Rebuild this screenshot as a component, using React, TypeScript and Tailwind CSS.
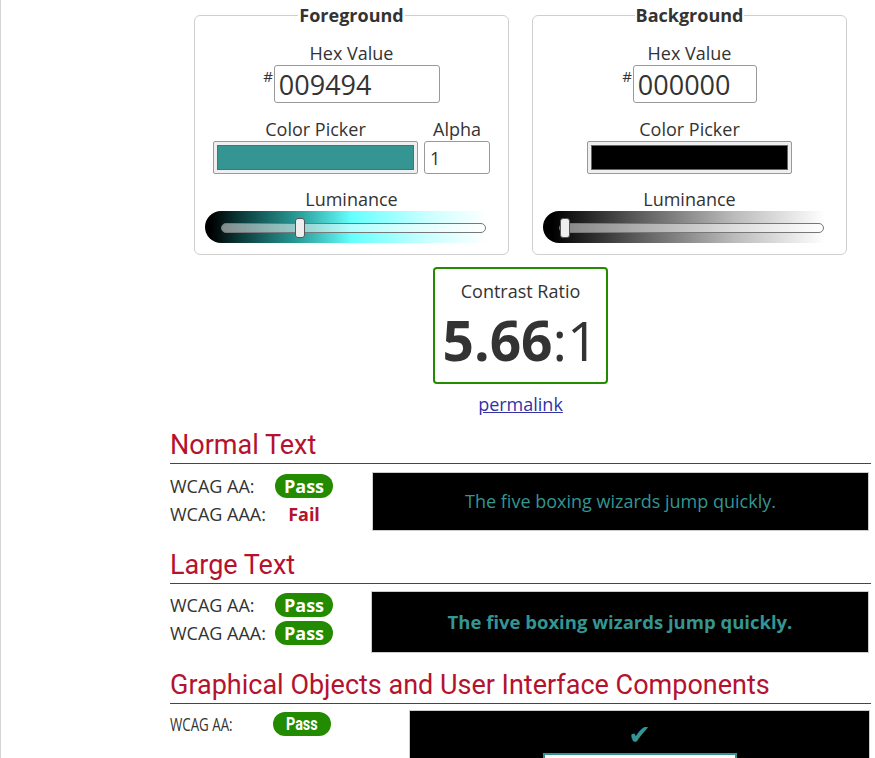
import React from "react";

const GREEN = "bg-[#238b00]";

function PassBadge({ condensed = false }: { condensed?: boolean }) {
  return (
    <span
      className={`${GREEN} inline-flex h-[24px] w-[58px] items-center justify-center rounded-full font-bold text-white text-[18px] leading-none`}
    >
      <span className={condensed ? "inline-block scale-x-[0.8] font-['Roboto',sans-serif]" : ""}>Pass</span>
    </span>
  );
}

function FailText() {
  return (
    <span className="inline-flex w-[58px] justify-center font-bold text-[#b5122e] text-[18px] leading-none">
      Fail
    </span>
  );
}

function Slider({ gradient, thumbLeft }: { gradient: "fg" | "bg"; thumbLeft: number }) {
  const bg =
    gradient === "fg"
      ? "bg-[linear-gradient(to_right,#000_2%,#0b3a3a_12%,#2a9e9a_32%,#66ffff_50%,#c8ffff_75%,#ffffff_96%)]"
      : "bg-[linear-gradient(to_right,#000_3%,#555_30%,#bbb_65%,#ffffff_96%)]";
  return (
    <div className={`relative h-[32px] w-[294px] rounded-l-full ${bg}`}>
      <div className="absolute left-[16px] right-[13px] top-[12px] h-[10px] rounded-full border border-[#777] bg-white/50" />
      <div
        className="absolute top-[7px] h-[20px] w-[10px] rounded-[3px] border border-[#555] bg-[#eee]"
        style={{ left: thumbLeft }}
      />
    </div>
  );
}

function ColorPanel({
  title,
  hex,
  hexWidth,
  swatch,
  alpha,
  thumbLeft,
}: {
  title: string;
  hex: string;
  hexWidth: string;
  swatch: string;
  alpha: boolean;
  thumbLeft: number;
}) {
  return (
    <fieldset className="h-[252px] w-[315px] rounded-[6px] border border-[#cfcfcf]">
      <legend className="mx-auto px-[1px] text-[18px] font-bold leading-[24px] text-[#333]">{title}</legend>
      <div className="flex flex-col items-center">
        <div className="mt-[14px] leading-[24px]">Hex Value</div>
        <div className="flex items-start">
          <span className="mr-[1px] mt-[4px] text-[15px] leading-none">#</span>
          <div
            className={`flex h-[38px] ${hexWidth} items-center rounded-[3px] border border-[#999] pl-[4px] text-[27px] leading-none`}
          >
            {hex}
          </div>
        </div>
        <div className="mt-[14px] flex items-end gap-[6px]">
          <div className="flex flex-col items-center">
            <div className="leading-[24px]">Color Picker</div>
            <div className="h-[33px] w-[205px] rounded-[2px] border border-[#999] bg-[#efefef] p-[3px]">
              <div className={`h-full w-full border border-[#666] ${swatch}`} />
            </div>
          </div>
          {alpha && (
            <div className="flex flex-col items-center">
              <div className="leading-[24px]">Alpha</div>
              <div className="flex h-[33px] w-[66px] items-center rounded-[3px] border border-[#999] pl-[5px] leading-none">
                1
              </div>
            </div>
          )}
        </div>
        <div className="mt-[13px] leading-[24px]">Luminance</div>
        <Slider gradient={alpha ? "fg" : "bg"} thumbLeft={thumbLeft} />
      </div>
    </fieldset>
  );
}

function SectionHeading({ children, first = false }: { children: React.ReactNode; first?: boolean }) {
  return (
    <h2
      className={`${first ? "mt-[13px]" : ""} border-b border-[#a8182f] pb-[2px] font-['Roboto',sans-serif] text-[27px] leading-[32px] text-[#b5122e]`}
    >
      {children}
    </h2>
  );
}

export default function App() {
  return (
    <div className="relative h-[758px] w-[875px] overflow-hidden border-l border-[#d4d4d4] bg-white font-['Open_Sans',sans-serif] text-[18px] text-[#333]">
      <div className="ml-[169px] w-[701px]">
        <div className="flex justify-center gap-[23px] pt-[3px]">
          <ColorPanel title="Foreground" hex="009494" hexWidth="w-[166px]" swatch="bg-[#349592]" alpha thumbLeft={90} />
          <ColorPanel title="Background" hex="000000" hexWidth="w-[124px]" swatch="bg-black" alpha={false} thumbLeft={17} />
        </div>

        <div className="flex flex-col items-center">
          <div className="mt-[12px] flex h-[117px] w-[175px] flex-col items-center rounded-[4px] border-2 border-[#238b00]">
            <div className="mt-[10px] leading-[24px]">Contrast Ratio</div>
            <div className="mt-[9px] text-[55px] leading-[55px]">
              <span className="font-bold">5.66</span>:1
            </div>
          </div>
          <a href="#" className="mt-[8px] leading-[24px] text-[#3232a6] underline">
            permalink
          </a>
        </div>

        <SectionHeading first>Normal Text</SectionHeading>
        <div className="mt-[8px] flex items-start">
          <div className="w-[202px]">
            <div className="flex h-[28px] items-center">
              <span className="w-[105px]">WCAG AA:</span>
              <PassBadge />
            </div>
            <div className="flex h-[28px] items-center">
              <span className="w-[105px]">WCAG AAA:</span>
              <FailText />
            </div>
          </div>
          <div className="flex h-[59px] w-[497px] items-center justify-center border border-[#ccc] bg-black text-[#349592]">
            The five boxing wizards jump quickly.
          </div>
        </div>

        <div className="mt-[18px]">
          <SectionHeading>Large Text</SectionHeading>
        </div>
        <div className="mt-[7px] flex items-start">
          <div className="w-[201px]">
            <div className="flex h-[28px] items-center">
              <span className="w-[105px]">WCAG AA:</span>
              <PassBadge />
            </div>
            <div className="flex h-[28px] items-center">
              <span className="w-[105px]">WCAG AAA:</span>
              <PassBadge />
            </div>
          </div>
          <div className="flex h-[62px] w-[498px] items-center justify-center border border-[#ccc] bg-black text-[18.5px] font-bold text-[#349592]">
            The five boxing wizards jump quickly.
          </div>
        </div>

        <div className="mt-[16px]">
          <SectionHeading>Graphical Objects and User Interface Components</SectionHeading>
        </div>
        <div className="mt-[6px] flex items-start">
          <div className="w-[239px]">
            <div className="flex h-[28px] items-center">
              <span className="w-[103px]">
                <span className="inline-block origin-left scale-x-[0.74] font-['Open_Sans',sans-serif]">WCAG AA:</span>
              </span>
              <PassBadge condensed />
            </div>
          </div>
          <div className="flex h-[80px] w-[461px] flex-col items-center border border-[#ccc] bg-black pt-[12px]">
            <span className="font-['DejaVu_Sans',sans-serif] text-[27px] leading-[24px] text-[#349592]">✔</span>
            <div className="mt-[6px] h-[30px] w-[194px] border-2 border-[#349592] bg-white" />
          </div>
        </div>
      </div>
    </div>
  );
}
